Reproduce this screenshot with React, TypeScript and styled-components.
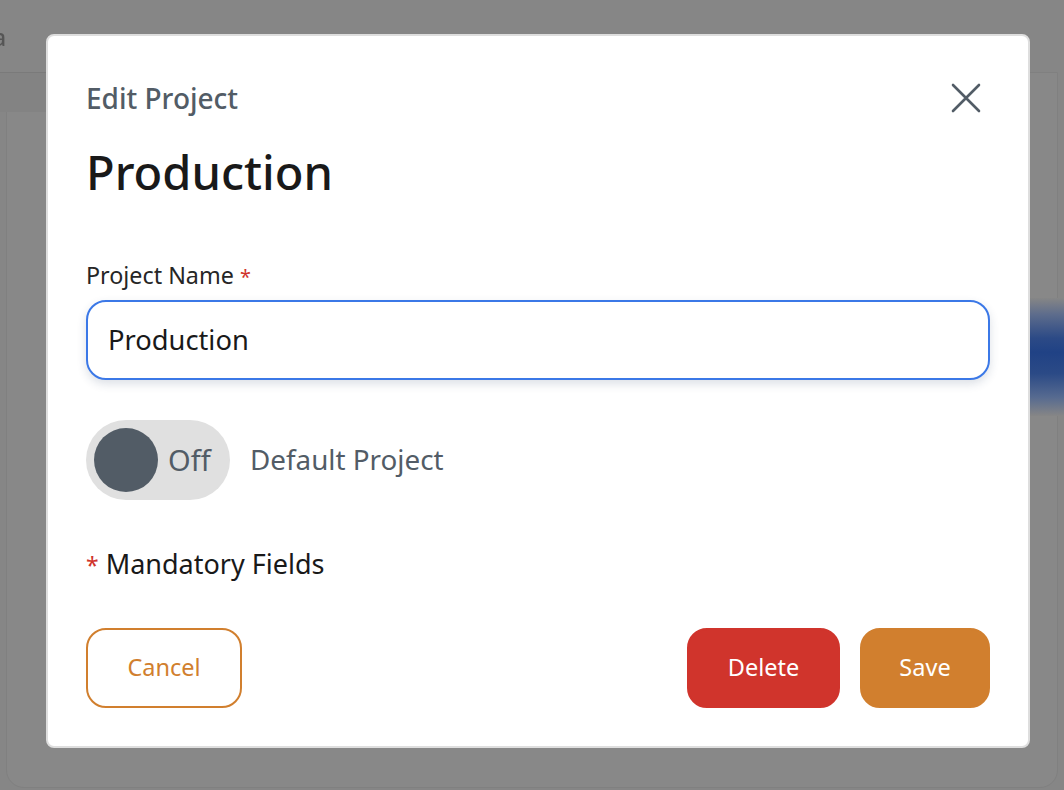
import React from 'react'
import styled, { createGlobalStyle } from 'styled-components'

const GlobalStyle = createGlobalStyle`
  html, body {
    margin: 0;
    height: 100%;
    background: #858585;
    font-family: 'Noto Sans', 'Open Sans', sans-serif;
  }
  * {
    box-sizing: border-box;
  }
`

const Backdrop = styled.div`
  position: fixed;
  inset: 0;
  overflow: hidden;
  background: #868686;
`

const PageLetter = styled.span`
  position: absolute;
  left: -7px;
  top: 21px;
  font-size: 23px;
  font-weight: 500;
  color: #555;
  filter: blur(0.5px);
`

const PageHeaderLine = styled.div`
  position: absolute;
  left: 0;
  top: 72px;
  width: 46px;
  height: 40px;
  border-top: 1px solid #7a7a7a;
  background: #838383;
`

const PageCard = styled.div`
  position: absolute;
  left: 6px;
  right: 6px;
  top: 72px;
  bottom: 2px;
  border: 1px solid #808080;
  border-radius: 0 0 18px 18px;
  background: #888888;
`

const BlueGlow = styled.div`
  position: absolute;
  left: 1030px;
  right: 0;
  top: 298px;
  height: 118px;
  background: linear-gradient(
    180deg,
    #868686 0%,
    #5d6c8c 14%,
    #2c4a86 34%,
    #204285 46%,
    #2b4a86 64%,
    #566a90 84%,
    #868686 100%
  );
`

const Overlay = styled.div`
  position: fixed;
  inset: 0;
  display: flex;
  justify-content: center;
  padding: 34px 0 0 12px;
`

const Modal = styled.div`
  width: 984px;
  height: 714px;
  padding: 38px;
  background: #ffffff;
  border: 2px solid #dedede;
  border-radius: 8px;
  position: relative;
`

const Caption = styled.div`
  font-size: 28px;
  line-height: 48px;
  height: 48px;
  font-weight: 500;
  color: #525c66;
`

const Title = styled.h1`
  margin: 20px 0 0;
  font-size: 47px;
  line-height: 60px;
  font-weight: 500;
  color: #191919;
`

const CloseButton = styled.button`
  position: absolute;
  top: 42px;
  right: 42px;
  width: 40px;
  height: 40px;
  padding: 0;
  display: flex;
  align-items: center;
  justify-content: center;
  border: 0;
  background: none;
  color: #525c66;
`

const Field = styled.div`
  margin-top: 57px;
  display: flex;
  flex-direction: column;
  gap: 9px;
`

const Label = styled.label`
  font-size: 23.3px;
  line-height: 32px;
  color: #262626;
`

const Required = styled.span`
  font-size: 0.85em;
  line-height: 0;
  color: #d0342c;
`

const NameInput = styled.input`
  width: 100%;
  height: 80px;
  padding: 0 20px 2px;
  font: inherit;
  font-size: 27.3px;
  color: #191919;
  background: #fff;
  border: 2px solid #3b78e7;
  border-radius: 20px;
  box-shadow: 0 4px 10px rgba(40, 60, 100, 0.16);
  outline: none;
`

const ToggleRow = styled.div`
  margin-top: 40px;
  display: flex;
  align-items: center;
  gap: 20px;
`

const Toggle = styled.div`
  width: 144px;
  height: 80px;
  padding: 8px;
  display: flex;
  align-items: center;
  gap: 10px;
  border-radius: 40px;
  background: #e0e0e0;
  font-size: 29px;
  line-height: 38px;
  color: #525c66;
`

const Knob = styled.span`
  width: 64px;
  height: 64px;
  border-radius: 50%;
  background: #525c66;
`

const ToggleLabel = styled.span`
  padding-bottom: 2px;
  font-size: 27.8px;
  color: #525c66;
`

const Mandatory = styled.div`
  margin-top: 44px;
  font-size: 27px;
  line-height: 40px;
  color: #191919;
`

const Footer = styled.div`
  margin-top: 44px;
  display: flex;
  justify-content: space-between;
`

const Actions = styled.div`
  display: flex;
  gap: 20px;
`

const Button = styled.button<{ $bg: string; $color: string; $width: number }>`
  width: ${(p) => p.$width}px;
  height: 80px;
  padding: 0 0 2px;
  font: inherit;
  font-size: 23.5px;
  color: ${(p) => p.$color};
  background: ${(p) => p.$bg};
  border: 2px solid ${(p) => (p.$bg === '#ffffff' ? p.$color : p.$bg)};
  border-radius: 20px;
`

export default function App() {
  return (
    <>
      <GlobalStyle />
      <Backdrop>
        <PageCard />
        <PageHeaderLine />
        <PageLetter>a</PageLetter>
        <BlueGlow />
      </Backdrop>
      <Overlay>
        <Modal>
          <Caption>Edit Project</Caption>
          <Title>Production</Title>
          <CloseButton aria-label='Close'>
            <svg width='40' height='40' viewBox='0 0 40 40' fill='none'>
              <path
                d='M7 7 L33 33 M33 7 L7 33'
                stroke='currentColor'
                strokeWidth='2.6'
                strokeLinecap='round'
              />
            </svg>
          </CloseButton>
          <Field>
            <Label>
              Project Name <Required>*</Required>
            </Label>
            <NameInput defaultValue='Production' />
          </Field>
          <ToggleRow>
            <Toggle>
              <Knob />
              Off
            </Toggle>
            <ToggleLabel>Default Project</ToggleLabel>
          </ToggleRow>
          <Mandatory>
            <Required>*</Required> Mandatory Fields
          </Mandatory>
          <Footer>
            <Button $bg='#ffffff' $color='#d17f2e' $width={156}>
              Cancel
            </Button>
            <Actions>
              <Button $bg='#d0342c' $color='#ffffff' $width={153}>
                Delete
              </Button>
              <Button $bg='#d17f2e' $color='#ffffff' $width={130}>
                Save
              </Button>
            </Actions>
          </Footer>
        </Modal>
      </Overlay>
    </>
  )
}
